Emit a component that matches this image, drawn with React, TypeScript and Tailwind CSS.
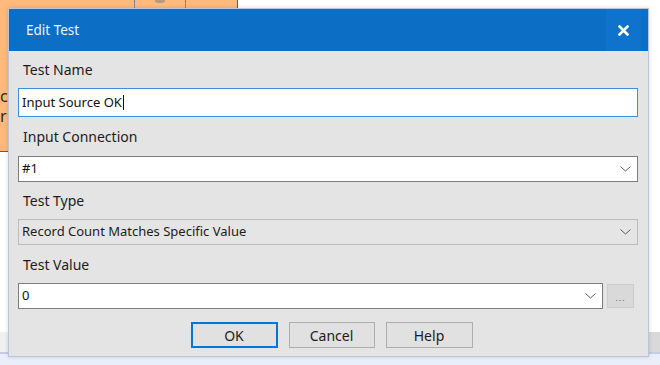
import React from "react";

const Chevron = () => (
  <svg width="11" height="6" viewBox="0 0 11 6" className="shrink-0">
    <polyline points="0.5,0.5 5.5,5 10.5,0.5" fill="none" stroke="#5a5a5a" strokeWidth="1" />
  </svg>
);

const Label = ({ text, h }: { text: string; h: string }) => (
  <div className={`flex items-center pl-[5px] text-[14px] text-[#1f1b1c] ${h}`}>{text}</div>
);

export default function App() {
  return (
    <div className="relative w-[660px] h-[365px] overflow-hidden bg-white font-['Noto_Sans',sans-serif]">
      {/* background app behind the dialog */}
      <div className="flex flex-col h-full">
        <div className="flex h-[332px]">
          <div className="w-[238px] h-[152px] bg-[#ffb97c] border-r border-b border-[#6b5a4a]">
            <div className="flex h-[10px]">
              <div className="w-[134px]" />
              <div className="w-0 h-full border-l border-dashed border-[#6d7f9a]" />
              <div className="w-[50px] flex justify-center">
                <div className="w-[10px] h-[3px] bg-[#b39a80] rounded-b" />
              </div>
              <div className="w-0 h-full border-l border-dashed border-[#6d7f9a]" />
            </div>
            <div className="flex flex-col text-[16px] leading-[20px] text-[#2a2a2a] mt-[76px]">
              <span>ca</span>
              <span>r</span>
            </div>
          </div>
          <div className="flex-1" />
        </div>
        <div className="h-[20px] flex">
          <div className="w-[20px] bg-[#f0f0f0]" />
          <div className="flex-1 bg-[#e8e8e8]" />
          <div className="w-[14px] bg-[#d9d9d9]" />
        </div>
        <div className="h-[2px] bg-[#c3cde3]" />
        <div className="flex-1 bg-[#eaeef8]" />
      </div>

      {/* dialog */}
      <div className="absolute left-[8px] top-[8px] w-[641px] h-[349px] flex flex-col bg-[#e4e4e4] border border-[#b8c5dc] shadow-[0_0_4px_rgba(0,0,0,0.15)]">
        <div className="h-[42px] flex items-center justify-between bg-[#0c6fc5] shrink-0">
          <span className="pl-[17px] text-[13.5px] text-[#eef4fb]">Edit Test</span>
          <div className="w-[35px] h-full mr-[7px] flex items-center justify-center bg-[#0f72cd]">
            <svg width="11" height="11" viewBox="0 0 11 11">
              <path d="M1.5 1.5 L9.5 9.5 M9.5 1.5 L1.5 9.5" stroke="#ffffff" strokeWidth="2.6" strokeLinecap="square" />
            </svg>
          </div>
        </div>

        <div className="flex flex-col pl-[9px] pr-[10px]">
          <Label text="Test Name" h="h-[37px]" />
          <div className="h-[29px] flex items-center bg-white border border-[#3b8ee0] pl-[3px] text-[13px] text-[#111]">
            <span>Input Source OK</span>
            <span className="w-px h-[15px] bg-[#111] ml-px" />
          </div>

          <Label text="Input Connection" h="h-[39px]" />
          <div className="h-[26px] flex items-center justify-between bg-white border border-[#7d7d7d] pl-[3px] pr-[6px] text-[13px] text-[#111]">
            <span>#1</span>
            <Chevron />
          </div>

          <Label text="Test Type" h="h-[37px]" />
          <div className="h-[26px] flex items-center justify-between bg-[#e5e5e5] border border-[#bcbcbc] pl-[3px] pr-[6px] text-[13px] text-[#1f1b1c]">
            <span>Record Count Matches Specific Value</span>
            <Chevron />
          </div>

          <Label text="Test Value" h="h-[38px]" />
          <div className="flex items-center gap-[4px]">
            <div className="flex-1 h-[26px] flex items-center justify-between bg-white border border-[#7d7d7d] pl-[3px] pr-[6px] text-[13px] text-[#111]">
              <span>0</span>
              <Chevron />
            </div>
            <div className="w-[27px] h-[24px] mr-[4px] flex items-end justify-center pb-[5px] bg-[#d9d9d9] border border-[#cccccc] text-[9px] leading-none tracking-[1px] text-[#5f6a95]">
              ...
            </div>
          </div>

          <div className="flex justify-center gap-[11px] mt-[13px] pl-[7px]">
            <button className="w-[87px] h-[26px] bg-[#e1e1e1] border-2 border-[#0078d7] text-[14px] text-[#1f1b1c]">
              OK
            </button>
            <button className="w-[86px] h-[26px] bg-[#e1e1e1] border border-[#adadad] text-[14px] text-[#1f1b1c]">
              Cancel
            </button>
            <button className="w-[87px] h-[26px] bg-[#e1e1e1] border border-[#adadad] text-[14px] text-[#1f1b1c]">
              Help
            </button>
          </div>
        </div>
      </div>
    </div>
  );
}
